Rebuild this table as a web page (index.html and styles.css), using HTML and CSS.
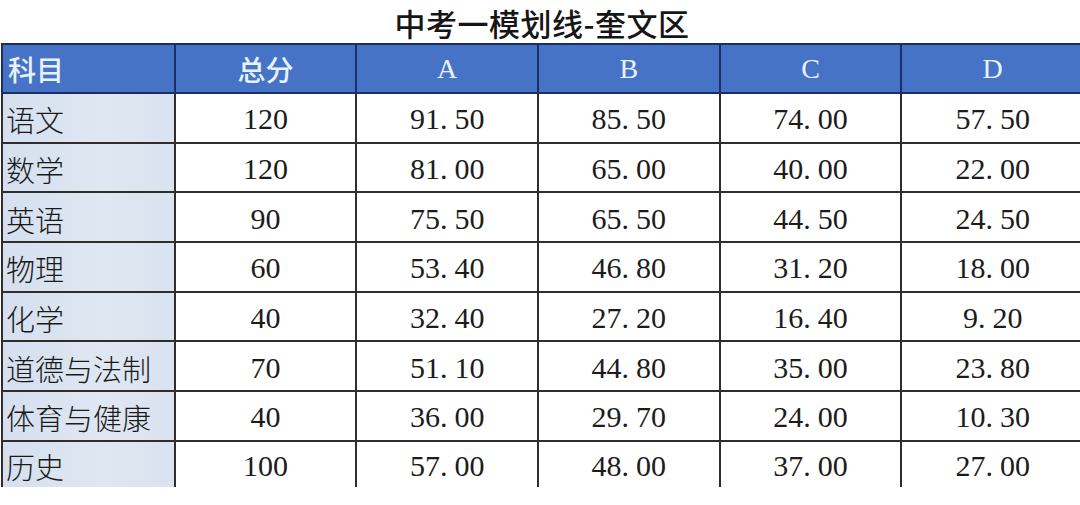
FILE: index.html
```html
<!DOCTYPE html>
<html lang="zh-CN">
<head>
<meta charset="utf-8">
<title>中考一模划线-奎文区</title>
<link rel="stylesheet" href="styles.css">
</head>
<body>
<h1 class="title">中考一模划线-奎文区</h1>
<table class="score">
  <colgroup>
    <col class="c-subj"><col class="c-num"><col class="c-num"><col class="c-num"><col class="c-num"><col class="c-num">
  </colgroup>
  <thead>
    <tr><th class="subj">科目</th><th>总分</th><th class="lat">A</th><th class="lat">B</th><th class="lat">C</th><th class="lat">D</th></tr>
  </thead>
  <tbody>
    <tr><td class="subj">语文</td><td>120</td><td>91<span class="pt">.</span>50</td><td>85<span class="pt">.</span>50</td><td>74<span class="pt">.</span>00</td><td>57<span class="pt">.</span>50</td></tr>
    <tr><td class="subj">数学</td><td>120</td><td>81<span class="pt">.</span>00</td><td>65<span class="pt">.</span>00</td><td>40<span class="pt">.</span>00</td><td>22<span class="pt">.</span>00</td></tr>
    <tr><td class="subj">英语</td><td>90</td><td>75<span class="pt">.</span>50</td><td>65<span class="pt">.</span>50</td><td>44<span class="pt">.</span>50</td><td>24<span class="pt">.</span>50</td></tr>
    <tr><td class="subj">物理</td><td>60</td><td>53<span class="pt">.</span>40</td><td>46<span class="pt">.</span>80</td><td>31<span class="pt">.</span>20</td><td>18<span class="pt">.</span>00</td></tr>
    <tr><td class="subj">化学</td><td>40</td><td>32<span class="pt">.</span>40</td><td>27<span class="pt">.</span>20</td><td>16<span class="pt">.</span>40</td><td>9<span class="pt">.</span>20</td></tr>
    <tr><td class="subj">道德与法制</td><td>70</td><td>51<span class="pt">.</span>10</td><td>44<span class="pt">.</span>80</td><td>35<span class="pt">.</span>00</td><td>23<span class="pt">.</span>80</td></tr>
    <tr><td class="subj">体育与健康</td><td>40</td><td>36<span class="pt">.</span>00</td><td>29<span class="pt">.</span>70</td><td>24<span class="pt">.</span>00</td><td>10<span class="pt">.</span>30</td></tr>
    <tr class="last"><td class="subj">历史</td><td>100</td><td>57<span class="pt">.</span>00</td><td>48<span class="pt">.</span>00</td><td>37<span class="pt">.</span>00</td><td>27<span class="pt">.</span>00</td></tr>
  </tbody>
</table>
</body>
</html>
```
FILE: styles.css
```css
html, body {
  margin: 0;
  padding: 0;
  background: #ffffff;
}
body {
  width: 1080px;
  height: 505px;
  overflow: hidden;
  color: #1c1c1c;
  font-family: "Liberation Serif", "Noto Sans CJK SC", serif;
}
.title {
  margin: 0;
  height: 43px;
  line-height: 45px;
  text-align: center;
  font-family: "Noto Sans CJK SC", sans-serif;
  font-size: 31px;
  font-weight: 500;
  color: #161616;
  letter-spacing: 0.5px;
  padding-left: 4px;
}
.score {
  border-collapse: collapse;
  table-layout: fixed;
  width: 1082px;
  margin-left: 1px;
}
.c-subj { width: 172px; }
.c-num { width: 181px; }
.score th, .score td {
  border: 2px solid #2e2e2e;
  padding: 0;
  text-align: center;
  vertical-align: middle;
  white-space: nowrap;
  overflow: hidden;
}
.score th {
  background: #4673c6;
  border-color: #1c2f62;
  color: #e6f3ff;
  font-family: "Noto Sans CJK SC", sans-serif;
  font-size: 28px;
  font-weight: 500;
  height: 47px;
}
.score th.lat {
  font-family: "Liberation Serif", serif;
  font-weight: 400;
  font-size: 28px;
}
.score th.subj {
  text-align: left;
  padding-left: 5px;
  border-left-color: #1c2f62;
}
.score td {
  font-size: 30px;
  background: #ffffff;
  padding-top: 3px;
  height: 44.7px;
}
.score td.subj {
  text-align: left;
  padding-left: 3px;
  font-family: "Noto Sans CJK SC", sans-serif;
  font-size: 29px;
  font-weight: 300;
  color: #1a1a1a;
  background: linear-gradient(90deg, #d5dfee 0%, #dfe7f2 60%, #d9e2ef 100%);
}
.pt {
  letter-spacing: 7px;
}
.score tr > :last-child {
  border-right: none;
}
.score tr.last td {
  border-bottom: none;
  height: 40px;
}
```
